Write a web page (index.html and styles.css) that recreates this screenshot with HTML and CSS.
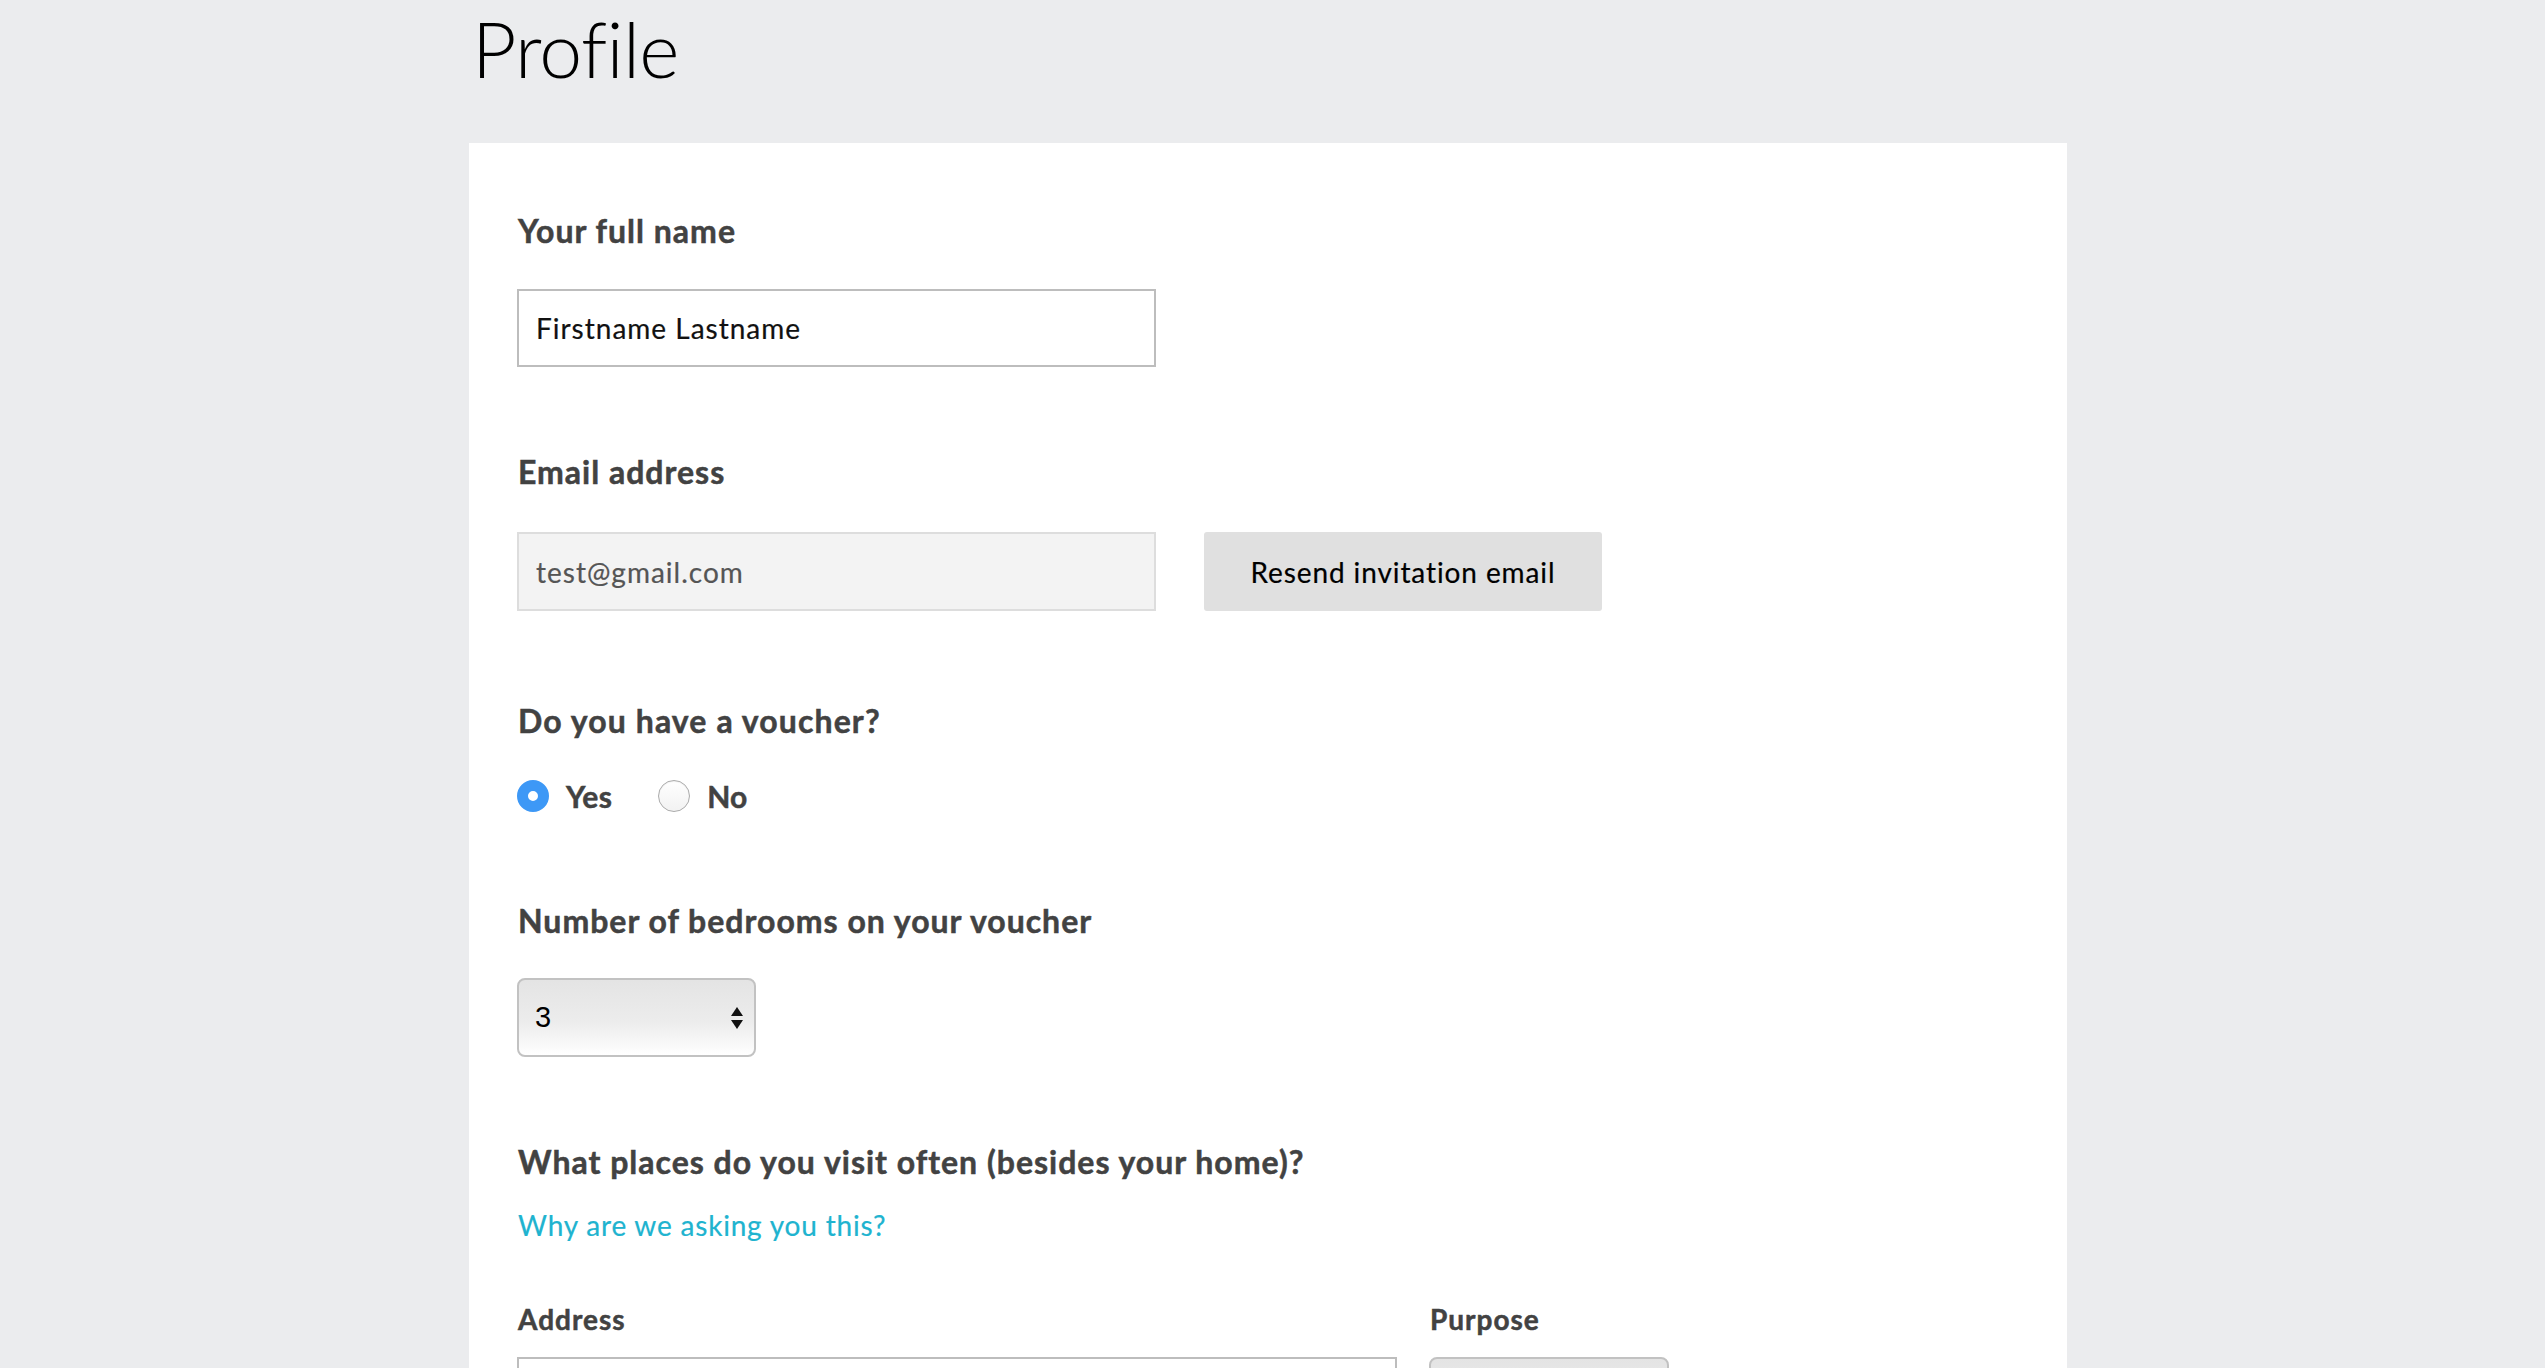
FILE: index.html
```html
<!DOCTYPE html>
<html lang="en">
<head>
<meta charset="utf-8">
<title>Profile</title>
<link rel="stylesheet" href="styles.css">
</head>
<body>
<div class="page">
  <header class="page-head">
    <h1 class="title">Profile</h1>
  </header>
  <main class="card">
    <section class="field field-first">
      <label class="label" for="fullname">Your full name</label>
      <input class="text-input" id="fullname" type="text" value="Firstname Lastname">
    </section>

    <section class="field field-email">
      <label class="label" for="email">Email address</label>
      <div class="inline-row">
        <input class="text-input text-input-readonly" id="email" type="text" value="test@gmail.com" readonly>
        <button class="button" type="button">Resend invitation email</button>
      </div>
    </section>

    <section class="field field-voucher">
      <div class="label">Do you have a voucher?</div>
      <div class="radio-group">
        <div class="radio-option">
          <span class="radio radio-checked"></span>
          <span class="radio-label">Yes</span>
        </div>
        <div class="radio-option">
          <span class="radio"></span>
          <span class="radio-label">No</span>
        </div>
      </div>
    </section>

    <section class="field field-bedrooms">
      <div class="label">Number of bedrooms on your voucher</div>
      <div class="select">
        <span class="select-value">3</span>
        <svg class="select-arrows" width="12" height="22" viewBox="0 0 12 22">
          <path d="M6 0 L12 9 L0 9 Z" fill="#111"/>
          <path d="M0 13 L12 13 L6 22 Z" fill="#111"/>
        </svg>
      </div>
    </section>

    <section class="field field-places">
      <div class="label">What places do you visit often (besides your home)?</div>
      <a class="help-link" href="#">Why are we asking you this?</a>
      <div class="places-row">
        <div class="col-address">
          <div class="sublabel">Address</div>
          <input class="text-input text-input-wide" type="text" value="">
        </div>
        <div class="col-purpose">
          <div class="sublabel">Purpose</div>
          <div class="select select-purpose">
            <span class="select-value"></span>
            <svg class="select-arrows" width="12" height="22" viewBox="0 0 12 22">
              <path d="M6 0 L12 9 L0 9 Z" fill="#111"/>
              <path d="M0 13 L12 13 L6 22 Z" fill="#111"/>
            </svg>
          </div>
        </div>
      </div>
    </section>
  </main>
</div>
</body>
</html>
```

FILE: styles.css
```css
html, body {
  margin: 0;
  padding: 0;
}

body {
  background: #ebecee;
  font-family: Lato, "Liberation Sans", sans-serif;
  color: #111;
}

.page {
  width: 1598px;
  margin-left: 469px;
}

.page-head {
  padding-top: 3px;
  padding-bottom: 49px;
}

.title {
  margin: 0;
  font-family: Lato, "Liberation Sans", sans-serif;
  font-weight: 300;
  font-size: 77px;
  line-height: 91px;
  letter-spacing: -0.7px;
  color: #000;
  padding-left: 3px;
}

.card {
  background: #fff;
  padding: 69px 48px 120px;
  min-height: 1400px;
  box-sizing: border-box;
}

.field-email {
  margin-top: 86px;
}

.field-voucher {
  margin-top: 91px;
}

.field-bedrooms {
  margin-top: 90px;
}

.field-places {
  margin-top: 86px;
}

.label {
  display: block;
  font-weight: 700;
  font-size: 32px;
  line-height: 37px;
  letter-spacing: 1px;
  color: #424242;
  -webkit-text-stroke: 0.5px #424242;
  margin-bottom: 40px;
  padding-left: 1px;
}

.field-email .label {
  margin-bottom: 42px;
}

.field-voucher .label {
  margin-bottom: 41px;
  letter-spacing: 1.1px;
}

.field-bedrooms .label {
  margin-bottom: 39px;
}

.field-places .label {
  margin-bottom: 0;
}

.text-input {
  display: block;
  box-sizing: border-box;
  width: 639px;
  height: 78px;
  margin: 0;
  padding: 0 17px;
  border: 2px solid #bdbdbd;
  border-radius: 0;
  background: #fff;
  font-family: Lato, "Liberation Sans", sans-serif;
  font-size: 28px;
  letter-spacing: 1px;
  color: #111;
  -webkit-text-stroke: 0.2px #111;
  outline: none;
}

.text-input-readonly {
  background: #f3f3f3;
  border-color: #dddddd;
  color: #555;
  -webkit-text-stroke: 0.2px #555;
  height: 79px;
}

.text-input-wide {
  width: 100%;
}

.inline-row {
  display: flex;
  align-items: center;
  gap: 48px;
}

.button {
  box-sizing: border-box;
  width: 398px;
  height: 79px;
  border: none;
  border-radius: 3px;
  background: #e0e0e0;
  font-family: Lato, "Liberation Sans", sans-serif;
  font-size: 28px;
  letter-spacing: 0.9px;
  color: #000;
  -webkit-text-stroke: 0.2px #000;
  padding: 0;
}

.radio-group {
  display: flex;
  align-items: center;
  height: 32px;
}

.radio-option {
  display: flex;
  align-items: center;
  gap: 17px;
  margin-right: 46px;
}

.radio {
  box-sizing: border-box;
  width: 32px;
  height: 32px;
  border-radius: 50%;
  border: 1px solid #ababab;
  background: linear-gradient(#ffffff, #f2f2f2);
  box-shadow: inset 0 1px 1px rgba(0, 0, 0, 0.06);
}

.radio-checked {
  border: 11px solid #3d98f6;
  background: #fff;
  box-shadow: none;
}

.radio-label {
  font-weight: 700;
  font-size: 30px;
  line-height: 32px;
  letter-spacing: 0.3px;
  color: #424242;
  -webkit-text-stroke: 0.5px #424242;
}

.select {
  box-sizing: border-box;
  display: flex;
  align-items: center;
  justify-content: space-between;
  width: 239px;
  height: 79px;
  padding: 0 11px 0 16px;
  border: 2px solid #c2c2c2;
  border-radius: 8px;
  background: linear-gradient(#e4e4e4 0%, #ececec 55%, #f8f8f8 85%, #ffffff 100%);
  font-family: "Liberation Sans", Arial, sans-serif;
  font-size: 29px;
  color: #000;
}

.select-arrows {
  display: block;
}

.help-link {
  display: block;
  margin-top: 28px;
  font-size: 28px;
  line-height: 34px;
  letter-spacing: 0.8px;
  color: #20b3cf;
  -webkit-text-stroke: 0.2px #20b3cf;
  text-decoration: none;
  padding-left: 1px;
}

.places-row {
  display: flex;
  gap: 32px;
  margin-top: 61px;
}

.col-address {
  width: 880px;
}

.col-purpose {
  width: 240px;
}

.sublabel {
  font-weight: 700;
  font-size: 28px;
  line-height: 32px;
  letter-spacing: 1px;
  color: #424242;
  -webkit-text-stroke: 0.5px #424242;
  margin-bottom: 22px;
  padding-left: 1px;
}

.select-purpose {
  width: 240px;
}
```
